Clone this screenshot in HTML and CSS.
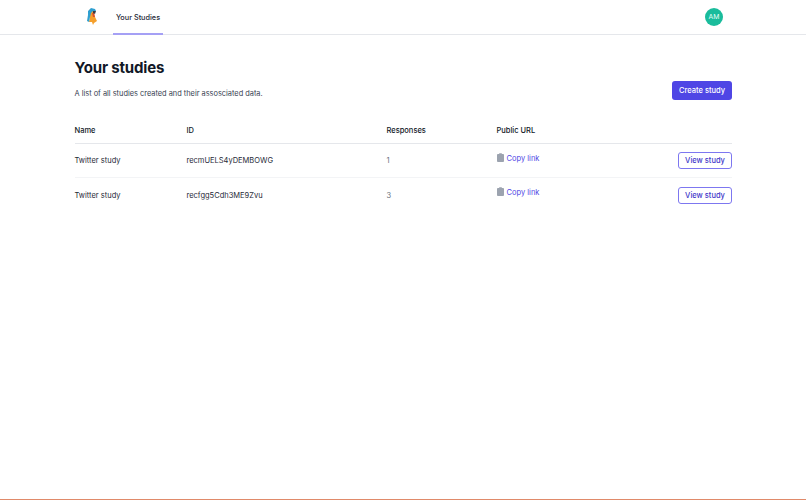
FILE: index.html
```html
<!DOCTYPE html>
<html lang="en">
<head>
<meta charset="utf-8">
<title>Your Studies</title>
<link rel="stylesheet" href="styles.css">
</head>
<body>
<div class="page">
  <header class="nav">
    <div class="nav-left">
      <svg class="logo" width="12" height="17" viewBox="0 0 12 17" aria-hidden="true">
        <path d="M3 2 L6 1 L8 5 L9 9 L11 13 L8 15 L7 17 L6 14 L3 14 L4 9 Z" fill="#f5a02c"/>
        <path d="M2 3 L5 0 L9 1 L10 3 L7 3 L5 5 L4 9 L3 14 L1 13 L2 7 Z" fill="#2f9fd0"/>
        <path d="M6 5 L8 5 L9 9 L7 9 Z" fill="#d9502e"/>
        <path d="M7 3 L10 3 L9 6 L7 5 Z" fill="#3b3b44"/>
      </svg>
      <a class="tab">Your Studies</a>
    </div>
    <div class="avatar">AM</div>
  </header>
  <main class="content">
    <div class="head-row">
      <div>
        <h1>Your studies</h1>
        <p class="sub">A list of all studies created and their assosciated data.</p>
      </div>
      <button class="btn-primary">Create study</button>
    </div>
    <div class="table">
      <div class="row row-head">
        <span>Name</span><span>ID</span><span>Responses</span><span>Public URL</span><span></span>
      </div>
      <div class="row">
        <span class="name">Twitter study</span>
        <span class="name">recmUELS4yDEMBOWG</span>
        <span class="muted">1</span>
        <a class="copy"><svg width="7" height="9" viewBox="0 0 8 10" aria-hidden="true"><path d="M2.500 0h3v1H7a1 1 0 0 1 1 1v7a1 1 0 0 1-1 1H1a1 1 0 0 1-1-1V2a1 1 0 0 1 1-1h1.500z" fill="#9ca3af"/></svg><span class="copy-label">Copy link</span></a>
        <span class="action"><button class="btn-outline">View study</button></span>
      </div>
      <div class="row">
        <span class="name">Twitter study</span>
        <span class="name">recfgg5Cdh3ME9Zvu</span>
        <span class="muted">3</span>
        <a class="copy"><svg width="7" height="9" viewBox="0 0 8 10" aria-hidden="true"><path d="M2.500 0h3v1H7a1 1 0 0 1 1 1v7a1 1 0 0 1-1 1H1a1 1 0 0 1-1-1V2a1 1 0 0 1 1-1h1.500z" fill="#9ca3af"/></svg><span class="copy-label">Copy link</span></a>
        <span class="action"><button class="btn-outline">View study</button></span>
      </div>
    </div>
  </main>
</div>
</body>
</html>
```
FILE: styles.css
```css
* { box-sizing: border-box; }
html, body { margin: 0; height: 100%; }
body {
  font-family: Inter, "Liberation Sans", sans-serif;
  background: #fff;
  color: #111827;
  font-size: 7.5px;
}
.page {
  height: 500px;
  border-bottom: 1px solid #e08a6a;
  overflow: hidden;
}
.nav {
  height: 35px;
  border-bottom: 1px solid #e5e7eb;
  display: flex;
  justify-content: space-between;
  align-items: stretch;
  padding: 0 83px 0 86px;
}
.nav-left { display: flex; align-items: stretch; }
.logo { align-self: center; margin-top: -2px; margin-right: 15px; }
.tab {
  width: 50px;
  height: 35px;
  border-bottom: 2px solid #a5a0f5;
  padding-top: 1px;
  display: flex;
  align-items: center;
  justify-content: center;
  font-weight: 500;
  color: #1f2937;
  font-size: 7.3px;
}
.avatar {
  align-self: center;
  margin-top: -1px;
  width: 18px;
  height: 18px;
  border-radius: 50%;
  background: #1abc9c;
  color: #e8fff8;
  font-size: 6.8px;
  font-weight: 400;
  display: flex;
  align-items: center;
  justify-content: center;
}
.content { padding: 0 74px 0 74.5px; }
.head-row {
  display: flex;
  justify-content: space-between;
  align-items: flex-end;
  padding-top: 22px;
}
h1 {
  margin: 0;
  font-size: 15px;
  line-height: 22px;
  font-weight: 700;
  color: #111827;
  letter-spacing: -0.15px;
}
.sub {
  margin: 8px 0 0;
  line-height: 13px;
  color: #374151;
  font-size: 7.4px;
}
.btn-primary {
  width: 60px;
  height: 19px;
  border: 0;
  border-radius: 3px;
  background: #4f46e5;
  color: #fff;
  font: 500 7.5px Inter, "Liberation Sans", sans-serif;
  padding: 0;
}
.table { margin-top: 16px; }
.row {
  display: grid;
  grid-template-columns: 112px 200px 110px 1fr 60px;
  align-items: center;
  height: 34px;
  border-bottom: 1px solid #f3f4f6;
  color: #1f2937;
}
.row:last-child { border-bottom: 0; }
.row-head {
  height: 28px;
  padding-top: 1px;
  border-bottom: 1px solid #e5e7eb;
  font-weight: 500;
  color: #111827;
}
.muted { color: #6b7280; }
.copy {
  display: flex;
  align-items: center;
  gap: 3px;
  color: #4f46e5;
  margin-top: -5px;
}
.copy svg { margin-top: -2px; }
.action { display: flex; justify-content: flex-end; }
.btn-outline {
  width: 54px;
  height: 17px;
  background: #fff;
  border: 1px solid #7d77f0;
  border-radius: 3px;
  color: #4338ca;
  font: 500 7.5px Inter, "Liberation Sans", sans-serif;
  padding: 0;
}
```
